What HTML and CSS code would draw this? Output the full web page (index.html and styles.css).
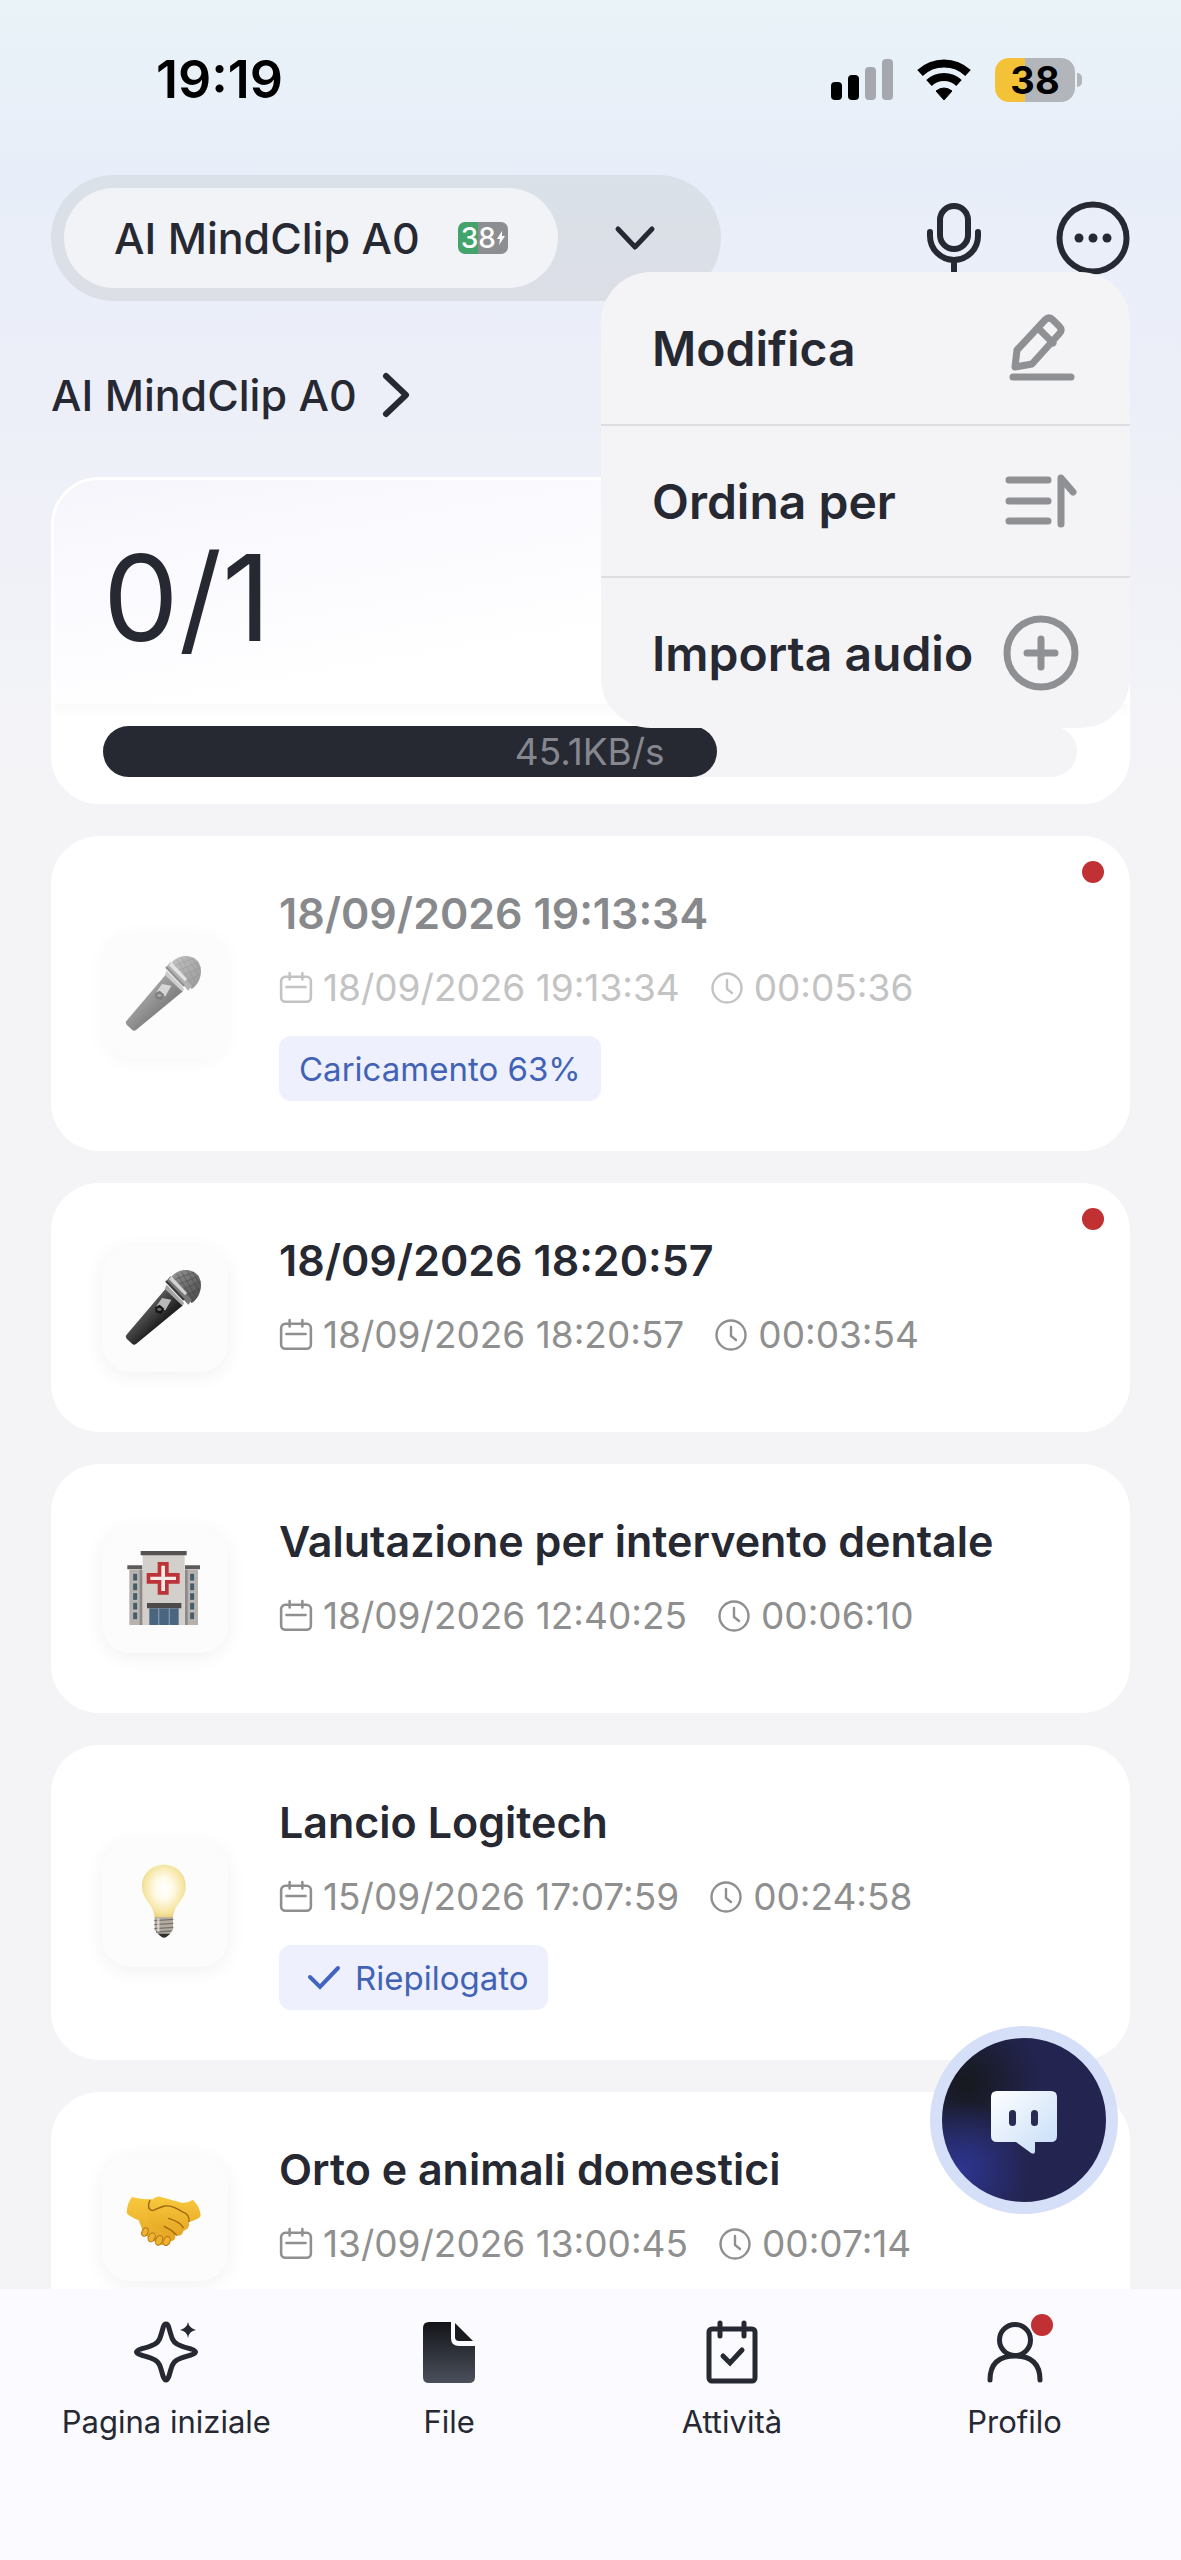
FILE: index.html
```html
<!DOCTYPE html>
<html lang="it">
<head>
    <meta charset="UTF-8">
    <meta name="viewport" content="width=device-width, initial-scale=1.0">
    <title>AI MindClip A0</title>
    <link rel="stylesheet" href="styles.css">
</head>
<body>
    <!-- Icone condivise -->
    <svg class="sprite" aria-hidden="true">
        <symbol id="calendar" viewBox="0 0 32 32">
            <path d="M6 5.500h20a4 4 0 0 1 4 4V25a4 4 0 0 1-4 4H6a4 4 0 0 1-4-4V9.500a4 4 0 0 1 4-4zM7 15h18M10 2v6M22 2v6" fill="none" stroke="currentColor" stroke-width="2.400" stroke-linecap="round"/>
        </symbol>
        <symbol id="clock" viewBox="0 0 34 34">
            <circle cx="17" cy="17" r="14.500" fill="none" stroke="currentColor" stroke-width="2.400"/>
            <path d="M17 9v9l5 4" fill="none" stroke="currentColor" stroke-width="2.400" stroke-linecap="round"/>
        </symbol>
        <symbol id="microphone" viewBox="134 117 240 240">
            <defs>
                <linearGradient id="mic-body" x1="0" y1="0" x2="1" y2="1">
                    <stop offset="0" stop-color="#222"/>
                    <stop offset=".35" stop-color="#585858"/>
                    <stop offset=".6" stop-color="#222"/>
                    <stop offset="1" stop-color="#111"/>
                </linearGradient>
                <linearGradient id="mic-head" x1="0" y1="0" x2="1" y2="1">
                    <stop offset="0" stop-color="#999"/>
                    <stop offset="1" stop-color="#444"/>
                </linearGradient>
            </defs>
            <path d="M138 315L256 176l52 50-141 116q-6 5-12-1l-16-15q-5-6-1-11z" fill="url(#mic-body)"/>
            <path d="M272 143c18-28 60-30 80-8 18 22 11 66-18 84z" fill="url(#mic-head)"/>
            <path d="M290 132l50 80M304 126l42 74M320 122l35 58M336 126l24 38M280 150l62-24M292 164l64-26M304 180l58-26M318 196l42-20" stroke="#2f2f2f" stroke-width="2" opacity=".55"/>
            <path d="M270 138l64 72-10 14-66-71z" fill="#777"/>
            <path d="M273 138l47 51-6 7-48-48z" fill="#d2d2d2"/>
            <path d="M259 164l52 54-4 10-54-52z" fill="#a5a5a5"/>
            <path d="M257 153l54 57" stroke="#3c3c3c" stroke-width="7"/>
            <path d="M245 204l28 5-18 32-31-6z" fill="#b9b9b9"/>
            <path d="M224 232l14-8 14 12-10 16-16-5z" fill="#151515"/>
            <ellipse cx="237" cy="238" rx="7" ry="5" fill="#666"/>
        </symbol>
        <symbol id="hospital" viewBox="134 121 240 240">
            <path d="M147 180h38v166h-38zM315 180h38v166h-38z" fill="#b6b1ad"/>
            <path d="M178 180h9v166h-9zM313 180h9v166h-9z" fill="#8d8986"/>
            <path d="M141 167h45v12h-45zM314 167h45v12h-45z" fill="#5d5b5b"/>
            <path d="M187 134h126v212H187z" fill="#d3cfcb"/>
            <path d="M181 124h138v13H181z" fill="#555353"/>
            <path d="M157 191h15v23h-15zM157 220h15v23h-15zM157 249h15v23h-15zM157 278h15v23h-15zM157 307h15v23h-15zM328 191h15v23h-15zM328 220h15v23h-15zM328 249h15v23h-15zM328 278h15v23h-15zM328 307h15v23h-15z" fill="#475c6b" stroke="#d4d2ce" stroke-width="2"/>
            <path d="M232 157h33v33h33v32h-33v33h-33v-33h-33v-32h33z" fill="#bc343a"/>
            <path d="M243 168h11v33h33v10h-33v33h-11v-33h-33v-10h33z" fill="#f8eae7"/>
            <path d="M200 280h103v16H200z" fill="#4d4a4b"/>
            <path d="M207 296h88v50h-88z" fill="#49657f"/>
            <path d="M235 296v50M267 296v50" stroke="#8198aa" stroke-width="4"/>
        </symbol>
        <symbol id="bulb" viewBox="134 135 240 240">
            <defs>
                <radialGradient id="glow" cx=".5" cy=".45" r=".58">
                    <stop offset="0" stop-color="#fff"/>
                    <stop offset=".35" stop-color="#fffbea"/>
                    <stop offset=".8" stop-color="#f5e49d"/>
                    <stop offset="1" stop-color="#e4cb75"/>
                </radialGradient>
            </defs>
            <path d="M251 137c38 0 65 28 65 64 0 45-35 51-38 96h-55c-3-45-38-51-38-96 0-36 28-64 66-64z" fill="url(#glow)"/>
            <path d="M223 295h55v38l-10 12h-35l-10-12z" fill="#b3aca2"/>
            <path d="M222 305l57-4M222 317l57-4M222 329l57-4M227 339l46-3" stroke="#77716a" stroke-width="4"/>
            <path d="M234 298v40" stroke="#eee8df" stroke-width="7" opacity=".7"/>
            <path d="M232 344h38l-12 10q-7 5-14 0z" fill="#312f2e"/>
        </symbol>
        <symbol id="handshake" viewBox="134 142 240 240">
            <defs>
                <linearGradient id="skin" x1="0" y1="0" x2="0" y2="1">
                    <stop offset="0" stop-color="#f8c93d"/>
                    <stop offset="1" stop-color="#e4a322"/>
                </linearGradient>
            </defs>
            <path d="M155 199q-15 18-16 48 10 12 36 22l15 38q8 12 18 13 5 13 19 13 6 13 21 9 20 7 23-11 15 0 14-14l-20-36-50-75q-35 0-60-7z" fill="url(#skin)"/>
            <path d="M207 219q13-23 32-21l65 18q18 3 33-9 22 19 24 48-4 10-35 19 4 20-17 27-4 18-25 13-6 10-20 5l-62-49-2-34q-2-9 7-17z" fill="url(#skin)"/>
            <path d="M209 208q-12 28 8 32 19-9 35-14 24-3 53 17 24 8 21 31" fill="none" stroke="#9f6612" stroke-width="4"/>
            <path d="M265 263q34 10 44 28M252 287q22 10 36 26" fill="none" stroke="#9f6612" stroke-width="4" stroke-linecap="round"/>
            <g fill="#eeb22f" stroke="#b57718" stroke-width="3">
                <ellipse cx="194" cy="304" rx="9" ry="13" transform="rotate(25 194 304)"/>
                <ellipse cx="214" cy="320" rx="10" ry="14" transform="rotate(25 214 320)"/>
                <ellipse cx="236" cy="329" rx="10" ry="15" transform="rotate(22 236 329)"/>
                <ellipse cx="259" cy="331" rx="10" ry="14" transform="rotate(25 259 331)"/>
            </g>
        </symbol>
    </svg>

    <div class="statusbar">
        <span class="time">19:19</span>
        <div class="indicators">
            <svg width="62" height="44" viewBox="0 0 62 44" aria-hidden="true">
                <rect x="0" y="24" width="11" height="18" rx="4"/>
                <rect x="17" y="17" width="11" height="25" rx="4"/>
                <rect x="34" y="9" width="11" height="33" rx="4" fill="#a5a9af"/>
                <rect x="51" y="1" width="11" height="41" rx="4" fill="#a5a9af"/>
            </svg>
            <svg width="58" height="44" viewBox="0 0 58 44" aria-hidden="true">
                <path d="M5 15a35 35 0 0 1 48 0M14 25a22 22 0 0 1 30 0" fill="none" stroke="#000" stroke-width="8"/>
                <path d="M21 33q8-6 16 0l-8 9z" stroke="#000" stroke-width="1" stroke-linejoin="round"/>
            </svg>
            <span class="battery">38</span>
        </div>
    </div>

    <header class="topbar">
        <div class="device-switch">
            <button class="device">
                AI MindClip A0
                <span class="device-battery">38<svg width="8" height="16" viewBox="0 0 8 16" aria-hidden="true"><path d="M5 1L0 9h3l-1 6 6-9H5z" fill="#fff"/></svg></span>
            </button>
            <button class="expand" aria-label="Cambia dispositivo">
                <svg width="42" height="26" viewBox="0 0 42 26" aria-hidden="true"><path d="M4 4l17 18L38 4" fill="none" stroke="#262832" stroke-width="5" stroke-linecap="round" stroke-linejoin="round"/></svg>
            </button>
        </div>
        <div class="actions">
            <button aria-label="Registra">
                <svg width="54" height="74" viewBox="0 0 54 74" fill="none" stroke="#262832" stroke-width="6" stroke-linecap="round" aria-hidden="true">
                    <rect x="13" y="5" width="28" height="43" rx="14"/>
                    <path d="M3 31v4a24 24 0 0 0 48 0v-4M27 60v10"/>
                </svg>
            </button>
            <button aria-label="Altro">
                <svg width="74" height="74" viewBox="0 0 74 74" aria-hidden="true">
                    <circle cx="37" cy="37" r="33.500" fill="none" stroke="#262832" stroke-width="6"/>
                    <g fill="#262832"><circle cx="23" cy="37" r="4.500"/><circle cx="37" cy="37" r="4.500"/><circle cx="51" cy="37" r="4.500"/></g>
                </svg>
            </button>
        </div>

        <div class="menu">
            <button class="menu-item">
                Modifica
                <svg width="76" height="76" viewBox="0 0 76 76" aria-hidden="true">
                    <path d="M12 57l2-17 28-30q4-4 8 0l6 6q4 4 0 8L29 54zM36 19l14 14M10 67h58"/>
                </svg>
            </button>
            <button class="menu-item">
                Ordina per
                <svg width="76" height="76" viewBox="0 0 76 76" aria-hidden="true">
                    <path d="M6 17h39M6 38h39M6 58h39M58 61V15l12 14"/>
                </svg>
            </button>
            <button class="menu-item">
                Importa audio
                <svg width="76" height="76" viewBox="0 0 76 76" aria-hidden="true">
                    <circle cx="38" cy="38" r="34"/>
                    <path d="M38 24v28M24 38h28"/>
                </svg>
            </button>
        </div>
    </header>

    <main>
        <h1>
            <a href="#">AI MindClip A0
                <svg width="30" height="48" viewBox="0 0 30 48" aria-hidden="true"><path d="M5 5l20 19L5 43" fill="none" stroke="#262832" stroke-width="6" stroke-linecap="round" stroke-linejoin="round"/></svg>
            </a>
        </h1>

        <section class="transfer">
            <div class="count">0/1</div>
            <div class="progress">
                <div class="track">
                    <div class="fill" style="width: 63%">45.1KB/s</div>
                </div>
            </div>
        </section>

        <article class="card uploading">
            <div class="thumb"><svg aria-hidden="true"><use href="#microphone"/></svg></div>
            <div class="info">
                <h2>18/09/2026 19:13:34</h2>
                <div class="meta">
                    <svg width="34" height="34" aria-hidden="true"><use href="#calendar"/></svg>
                    <span class="date">18/09/2026 19:13:34</span>
                    <svg width="34" height="34" aria-hidden="true"><use href="#clock"/></svg>
                    <span>00:05:36</span>
                </div>
                <span class="tag">Caricamento 63%</span>
            </div>
            <span class="dot"></span>
        </article>

        <article class="card">
            <div class="thumb"><svg aria-hidden="true"><use href="#microphone"/></svg></div>
            <div class="info">
                <h2>18/09/2026 18:20:57</h2>
                <div class="meta">
                    <svg width="34" height="34" aria-hidden="true"><use href="#calendar"/></svg>
                    <span class="date">18/09/2026 18:20:57</span>
                    <svg width="34" height="34" aria-hidden="true"><use href="#clock"/></svg>
                    <span>00:03:54</span>
                </div>
            </div>
            <span class="dot"></span>
        </article>

        <article class="card">
            <div class="thumb"><svg aria-hidden="true"><use href="#hospital"/></svg></div>
            <div class="info">
                <h2>Valutazione per intervento dentale</h2>
                <div class="meta">
                    <svg width="34" height="34" aria-hidden="true"><use href="#calendar"/></svg>
                    <span class="date">18/09/2026 12:40:25</span>
                    <svg width="34" height="34" aria-hidden="true"><use href="#clock"/></svg>
                    <span>00:06:10</span>
                </div>
            </div>
        </article>

        <article class="card">
            <div class="thumb"><svg aria-hidden="true"><use href="#bulb"/></svg></div>
            <div class="info">
                <h2>Lancio Logitech</h2>
                <div class="meta">
                    <svg width="34" height="34" aria-hidden="true"><use href="#calendar"/></svg>
                    <span class="date">15/09/2026 17:07:59</span>
                    <svg width="34" height="34" aria-hidden="true"><use href="#clock"/></svg>
                    <span>00:24:58</span>
                </div>
                <span class="tag done">
                    <svg width="34" height="26" viewBox="0 0 34 26" aria-hidden="true"><path d="M3 12l10 10L31 3" fill="none" stroke="#4263c0" stroke-width="4" stroke-linecap="round"/></svg>
                    Riepilogato
                </span>
            </div>
        </article>

        <article class="card">
            <div class="thumb"><svg aria-hidden="true"><use href="#handshake"/></svg></div>
            <div class="info">
                <h2>Orto e animali domestici</h2>
                <div class="meta">
                    <svg width="34" height="34" aria-hidden="true"><use href="#calendar"/></svg>
                    <span class="date">13/09/2026 13:00:45</span>
                    <svg width="34" height="34" aria-hidden="true"><use href="#clock"/></svg>
                    <span>00:07:14</span>
                </div>
            </div>
        </article>

        <button class="chat" aria-label="Assistente">
            <svg width="68" height="64" viewBox="0 0 68 64" aria-hidden="true">
                <defs>
                    <linearGradient id="bubble" x1="0" y1="0" x2="1" y2="1">
                        <stop offset="0" stop-color="#fff"/>
                        <stop offset="1" stop-color="#c5dcf8"/>
                    </linearGradient>
                </defs>
                <path d="M7 0h54q6 0 6 6v39q0 6-6 6H45v9q0 4-4 2L26 51H7q-6 0-6-6V6q0-6 6-6z" fill="url(#bubble)"/>
                <rect x="19" y="19" width="7" height="16" rx="3.500" fill="#292b54"/>
                <rect x="41" y="19" width="7" height="16" rx="3.500" fill="#292b54"/>
            </svg>
        </button>
    </main>

    <nav class="tabs">
        <a href="#">
            <svg width="64" height="64" viewBox="0 0 64 64" aria-hidden="true">
                <path d="M32 4q2 0 3 4c3 11 4 14 8 16 3 2 7 3 14 5 6 2 6 4 0 6-7 2-11 3-14 5-4 2-5 5-8 16q-3 8-6 0c-3-11-4-14-8-16-3-2-7-3-14-5-6-2-6-4 0-6 7-2 11-3 14-5 4-2 5-5 8-16q1-4 3-4z" fill="none" stroke="#262832" stroke-width="5" stroke-linejoin="round"/>
                <path d="M54 2q1 6 8 8-7 1-8 8-1-7-8-8 7-2 8-8z" fill="#262832"/>
            </svg>
            Pagina iniziale
        </a>
        <a href="#">
            <svg width="64" height="64" viewBox="0 0 64 64" aria-hidden="true">
                <defs>
                    <linearGradient id="sheet" x1="0" y1="0" x2="0" y2="1">
                        <stop offset="0" stop-color="#131419"/>
                        <stop offset="1" stop-color="#4a505b"/>
                    </linearGradient>
                </defs>
                <path d="M12 2h22v16q0 8 8 8h16v31q0 6-6 6H12q-6 0-6-6V8q0-6 6-6z" fill="url(#sheet)"/>
                <path d="M38 3l18 18H42q-4 0-4-4z" fill="#1a1b21"/>
            </svg>
            File
        </a>
        <a href="#">
            <svg width="64" height="64" viewBox="0 0 64 64" fill="none" stroke="#262832" stroke-width="5" stroke-linecap="round" aria-hidden="true">
                <rect x="9" y="9" width="46" height="52" rx="3"/>
                <path d="M20 3v13M44 3v13M23 36l7 7 12-13"/>
            </svg>
            Attività
        </a>
        <a href="#" class="profile">
            <svg width="64" height="64" viewBox="0 0 64 64" fill="none" stroke="#262832" stroke-width="5" stroke-linecap="round" aria-hidden="true">
                <circle cx="32" cy="20" r="15.500"/>
                <path d="M7 60q0-24 25-24t25 24"/>
            </svg>
            Profilo
            <span class="dot"></span>
        </a>
    </nav>
</body>
</html>
```
FILE: styles.css
```css
* {
    box-sizing: border-box;
}

body {
    font-family: 'Inter', 'Liberation Sans', sans-serif;
    margin: 0;
    height: 100vh;
    display: flex;
    flex-direction: column;
    color: #262832;
    background: #f4f4f7 linear-gradient(to bottom, #eaf3f8 0, #e8eef9 180px, #edeff8 400px, #f4f4f7 800px) no-repeat;
}

button {
    font: inherit;
    color: inherit;
    background: none;
    border: none;
    padding: 0;
    cursor: pointer;
}

a {
    color: inherit;
    text-decoration: none;
}

svg {
    display: block;
    flex: none;
}

.sprite {
    position: absolute;
    width: 0;
    height: 0;
}

/* Barra di stato */
.statusbar {
    display: flex;
    justify-content: space-between;
    align-items: center;
    padding: 50px 98px 65px 156px;
    color: #000;
}

.time {
    font-size: 52px;
    line-height: 60px;
    font-weight: 600;
}

.indicators {
    display: flex;
    align-items: center;
    gap: 22px;
}

.battery {
    position: relative;
    width: 80px;
    height: 44px;
    margin-right: 8px;
    border-radius: 14px;
    background: linear-gradient(to right, #f4c237 38%, #b2b5ba 38%);
    font-size: 38px;
    line-height: 44px;
    font-weight: 700;
    text-align: center;
}

.battery::after {
    content: '';
    position: absolute;
    left: 82px;
    top: 15px;
    width: 5px;
    height: 14px;
    border-radius: 0 5px 5px 0;
    background: #b2b5ba;
}

/* Testata */
.topbar {
    position: relative;
    z-index: 2;
    display: flex;
    justify-content: space-between;
    align-items: center;
    margin: 0 51px;
}

.device-switch {
    display: flex;
    align-items: center;
    padding: 13px;
    border-radius: 63px;
    background: linear-gradient(to bottom, #dae1e8, #dcdee6);
}

.device {
    display: flex;
    align-items: center;
    gap: 38px;
    height: 100px;
    padding: 0 50px;
    border-radius: 50px;
    background: #f1f3f7;
    font-size: 43px;
    font-weight: 500;
}

.device-battery {
    display: flex;
    align-items: center;
    gap: 1px;
    height: 32px;
    padding: 0 3px;
    border-radius: 7px;
    background: linear-gradient(to right, #43a36b 40%, #8d8e91 40%);
    color: #fff;
    font-size: 28px;
}

.expand {
    padding: 30px 52px 30px 56px;
}

.actions {
    display: flex;
    align-items: center;
    gap: 75px;
}

.menu {
    position: absolute;
    top: 97px;
    right: 0;
    width: 529px;
    border-radius: 50px;
    background: #f4f4f7;
}

.menu-item {
    display: flex;
    justify-content: space-between;
    align-items: center;
    width: 100%;
    height: 152px;
    padding: 0 51px;
    font-size: 48px;
    font-weight: 600;
}

.menu-item + .menu-item {
    border-top: 2px solid #dedee2;
}

.menu-item svg {
    fill: none;
    stroke: #8f9093;
    stroke-width: 7;
    stroke-linecap: round;
    stroke-linejoin: round;
}

/* Elenco */
main {
    position: relative;
    flex: 1;
    min-height: 0;
    overflow: hidden;
    padding: 66px 51px 0;
}

h1 {
    margin: 0 0 54px;
    font-size: 43px;
    line-height: 56px;
    font-weight: 500;
}

h1 a {
    display: inline-flex;
    align-items: center;
    gap: 24px;
}

.transfer {
    border: 3px solid #fff;
    border-radius: 48px;
    background: linear-gradient(170deg, #f5f5fb 0, #fbfbff 25%, #fff 50%);
}

.count {
    padding: 54px 49px 42px;
    font-size: 120px;
    line-height: 128px;
    font-weight: 400;
}

.progress {
    padding: 22px 50px 24px 49px;
    border-radius: 0 0 45px 45px;
    background: linear-gradient(to bottom, #fafafa 0, #fff 14px);
}

.track {
    height: 51px;
    border-radius: 26px;
    background: #f4f4f7;
}

.fill {
    height: 51px;
    padding-right: 52px;
    border-radius: 26px;
    background: #262832;
    color: #85878f;
    font-size: 37px;
    line-height: 51px;
    text-align: right;
}

.card {
    position: relative;
    display: flex;
    align-items: center;
    gap: 51px;
    margin-top: 32px;
    padding: 52px 51px 50px;
    border-radius: 48px;
    background: #fff;
}

.thumb {
    flex: none;
    padding: 23px;
    border-radius: 28px;
    background: #fcfcfc;
    box-shadow: 0 4px 20px rgba(0, 0, 0, 0.06);
}

.thumb svg {
    width: 80px;
    height: 80px;
}

.info {
    min-height: 147px;
}

h2 {
    margin: 0 0 27px;
    font-size: 43px;
    line-height: 50px;
    font-weight: 600;
}

.meta {
    display: flex;
    align-items: center;
    gap: 10px;
    color: #8f8f8f;
    font-size: 37px;
    line-height: 46px;
}

.date {
    margin-right: 20px;
}

.tag {
    display: inline-flex;
    align-items: center;
    gap: 14px;
    height: 65px;
    margin-top: 25px;
    padding: 0 20px;
    border-radius: 12px;
    background: #eef1fd;
    color: #4263b5;
    font-size: 33px;
    vertical-align: top;
}

.done {
    padding-left: 28px;
}

.dot {
    position: absolute;
    top: 25px;
    right: 26px;
    width: 22px;
    height: 22px;
    border-radius: 50%;
    background: #c13033;
}

/* Registrazione ancora in caricamento */
.uploading h2 {
    color: #88898c;
}

.uploading .meta {
    color: #c3c3c3;
}

.uploading .thumb {
    box-shadow: 0 4px 20px rgba(0, 0, 0, 0.03);
}

.uploading .thumb svg {
    opacity: 0.55;
}

.chat {
    position: absolute;
    right: 63px;
    bottom: 75px;
    display: flex;
    align-items: center;
    justify-content: center;
    width: 188px;
    height: 188px;
    padding-top: 6px;
    border: 12px solid #d6dff8;
    border-radius: 50%;
    background:
        radial-gradient(circle at 12% 80%, #2d358f 0, rgba(45, 53, 143, 0) 35%),
        radial-gradient(circle at 15% 28%, #16191d 0, rgba(22, 25, 29, 0) 40%),
        #23244f;
}

/* Navigazione */
.tabs {
    display: grid;
    grid-template-columns: repeat(4, 1fr);
    padding: 31px 25px 120px;
    background: #fafaff;
}

.tabs a {
    position: relative;
    display: flex;
    flex-direction: column;
    align-items: center;
    gap: 20px;
    font-size: 31px;
    line-height: 36px;
}

.profile .dot {
    top: -6px;
    right: 50%;
    margin-right: -38px;
}
```
